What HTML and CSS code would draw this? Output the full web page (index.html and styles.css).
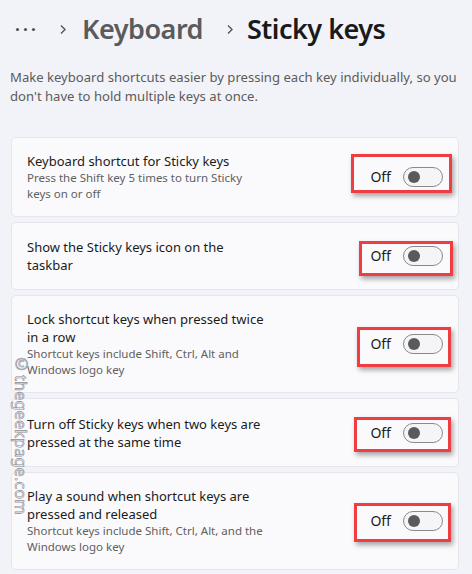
FILE: index.html
```html
<!DOCTYPE html>
<html>
<head>
<meta charset="utf-8">
<link rel="stylesheet" href="styles.css">
</head>
<body>
<div class="page">
  <header class="crumbs">
    <svg class="dots" width="21" height="5" viewBox="0 0 21 5"><circle cx="2.5" cy="2.5" r="1.6" fill="#555"/><circle cx="10.5" cy="2.5" r="1.6" fill="#555"/><circle cx="18.5" cy="2.5" r="1.6" fill="#555"/></svg>
    <svg class="chev chev-1" width="8" height="11" viewBox="0 0 8 11"><path d="M2 1.5 L6 5.5 L2 9.5" fill="none" stroke="#555" stroke-width="1.4"/></svg>
    <span class="crumb">Keyboard</span>
    <svg class="chev chev-2" width="8" height="11" viewBox="0 0 8 11"><path d="M2 1.5 L6 5.5 L2 9.5" fill="none" stroke="#555" stroke-width="1.4"/></svg>
    <span class="crumb current">Sticky keys</span>
  </header>
  <p class="desc">Make keyboard shortcuts easier by pressing each key individually, so you don't have to hold multiple keys at once.</p>

  <div class="cards">
    <div class="card c1">
      <div class="text">
        <div class="title">Keyboard shortcut for Sticky keys</div>
        <div class="sub">Press the Shift key 5 times to turn Sticky<br>keys on or off</div>
      </div>
      <div class="control"><span class="state">Off</span><span class="toggle"><span class="knob"></span></span><span class="mark m1"></span></div>
    </div>
    <div class="card c2">
      <div class="text">
        <div class="title">Show the Sticky keys icon on the<br>taskbar</div>
      </div>
      <div class="control"><span class="state">Off</span><span class="toggle"><span class="knob"></span></span><span class="mark m2"></span></div>
    </div>
    <div class="card c3">
      <div class="text">
        <div class="title">Lock shortcut keys when pressed twice<br>in a row</div>
        <div class="sub">Shortcut keys include Shift, Ctrl, Alt and<br>Windows logo key</div>
      </div>
      <div class="control"><span class="state">Off</span><span class="toggle"><span class="knob"></span></span><span class="mark m3"></span></div>
    </div>
    <div class="card c4">
      <div class="text">
        <div class="title">Turn off Sticky keys when two keys are<br>pressed at the same time</div>
      </div>
      <div class="control"><span class="state">Off</span><span class="toggle"><span class="knob"></span></span><span class="mark m4"></span></div>
    </div>
    <div class="card c5">
      <div class="text">
        <div class="title">Play a sound when shortcut keys are<br>pressed and released</div>
        <div class="sub">Shortcut keys include Shift, Ctrl, Alt, and the<br>Windows logo key</div>
      </div>
      <div class="control"><span class="state">Off</span><span class="toggle"><span class="knob"></span></span><span class="mark m5"></span></div>
    </div>
  </div>
  <div class="watermark">©thegeekpage.com</div>
</div>
</body>
</html>
```

FILE: styles.css
```css
html, body {
  margin: 0;
  padding: 0;
  background: #f2f3f8;
}
body {
  font-family: "Noto Sans", "Open Sans", sans-serif;
  color: #1b1b1b;
  width: 472px;
  height: 574px;
  overflow: hidden;
}
.page {
  position: relative;
  padding: 0 13px 0 11px;
}
.crumbs {
  display: flex;
  align-items: center;
  height: 58px;
  padding-left: 4px;
}
.dots { display: block; }
.chev { display: block; }
.chev-1 { margin: 0 15px 0 23px; }
.chev-2 { margin: 0 13px 0 23px; }
.crumb {
  font-size: 27px;
  font-weight: 600;
  color: #5b5b5b;
  line-height: 40px;
  letter-spacing: -0.5px;
}
.crumb.current {
  color: #1a1a1a;
}
.desc {
  margin: 10px 0 0 -1px;
  font-size: 13.1px;
  line-height: 19px;
  color: #5c5c5c;
}
.cards {
  margin-top: 31px;
  display: flex;
  flex-direction: column;
  gap: 5px;
}
.card {
  background: #fafafc;
  border: 1px solid #e5e6ea;
  border-radius: 5px;
  display: flex;
  align-items: center;
  justify-content: space-between;
  padding: 0 15px 0 15px;
  box-sizing: border-box;
}
.c1 { height: 80px; }
.c2 { height: 68px; }
.c3 { height: 98px; }
.c4 { height: 69px; }
.c5 { height: 98px; }
.title {
  font-size: 13px;
  line-height: 18px;
  color: #1b1b1b;
}
.sub {
  font-size: 11.5px;
  line-height: 16px;
  color: #606060;
}
.control {
  position: relative;
  display: flex;
  align-items: center;
  gap: 12px;
}
.state {
  font-size: 14px;
  line-height: 20px;
  color: #1b1b1b;
}
.toggle {
  position: relative;
  display: block;
  width: 40px;
  height: 20px;
  box-sizing: border-box;
  border: 1px solid #8a8a8a;
  border-radius: 10px;
  background: #f5f5f7;
}
.knob {
  position: absolute;
  left: 4px;
  top: 3px;
  width: 12px;
  height: 12px;
  border-radius: 50%;
  background: #5a5a5a;
}
.mark {
  position: absolute;
  border: 3px solid #ef3e42;
  box-shadow: 2px 3px 5px rgba(0,0,0,0.35);
}
.m1 { left: -19px; right: -9px; top: -13px; bottom: -6px; }
.m2 { left: -11px; right: -10px; top: -5px; bottom: -10px; }
.m3 { left: -13px; right: -8px; top: -7px; bottom: -13px; }
.m4 { left: -16px; right: -8px; top: -6px; bottom: -9px; }
.m5 { left: -16px; right: -8px; top: -8px; bottom: -11px; }
.watermark {
  position: absolute;
  left: 12px;
  top: 352px;
  writing-mode: vertical-rl;
  font-size: 16.5px;
  line-height: 18px;
  color: rgba(235,235,240,0.7);
  -webkit-text-stroke: 0.6px #8e8e96;
}
```
